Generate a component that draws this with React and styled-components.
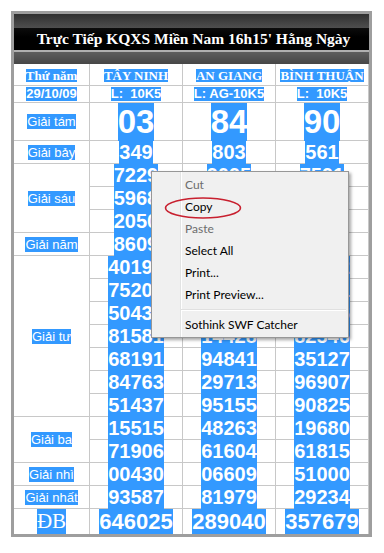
import React from 'react';
import styled, { createGlobalStyle } from 'styled-components';

const Global = createGlobalStyle`
  html, body { margin: 0; padding: 0; background: #fff; }
  body { font-family: "Liberation Sans", Arial, sans-serif; }
`;

const Page = styled.div`
  position: relative;
  width: 384px;
  height: 553px;
  overflow: hidden;
  padding: 11px 0 0 11px;
  box-sizing: border-box;
`;

const Frame = styled.div`
  width: 361px;
  border: 3px solid #9e9e9e;
  box-sizing: border-box;
  background: #fff;
`;

const TopBand = styled.div`
  height: 14px;
  background: linear-gradient(#303030, #4e4e4e);
`;

const TitleBand = styled.div`
  height: 22px;
  background: linear-gradient(#0c0c0c, #000 40%);
  color: #fff;
  font: bold 15.5px "Liberation Serif", "Times New Roman", serif;
  line-height: 22px;
  text-align: center;
  white-space: nowrap;
  padding-left: 4px;
`;

const Rule = styled.div`
  height: 2px;
  background: #b0b0b0;
`;

const SubBand = styled.div`
  height: 12px;
  background: linear-gradient(#5e5e5e, #464646);
`;

const Grid = styled.div`
  display: grid;
  grid-template-columns: 76px 93px 93px 93px;
  grid-template-rows: 22px 17px 38px repeat(16, 23px) 25px;
`;

const Cell = styled.div`
  box-sizing: border-box;
  border-right: 1px solid #c8c8c8;
  border-bottom: ${(p) => (p.$last ? 0 : 1)}px solid #c8c8c8;
  display: flex;
  justify-content: center;
  align-items: ${(p) => (p.$top ? 'flex-start' : 'center')};
  grid-row: ${(p) => (p.$span ? `span ${p.$span}` : 'auto')};
  min-width: 0;
  min-height: 0;
`;

const Num = styled.span`
  display: inline-block;
  background: #3399ff;
  color: #fff;
  font-family: "Liberation Sans", Arial, sans-serif;
  font-weight: bold;
  font-size: ${(p) => p.$size}px;
  height: ${(p) => p.$h}px;
  line-height: ${(p) => p.$h}px;
  white-space: nowrap;
`;

const HeadText = styled.span`
  display: inline-block;
  background: #3399ff;
  color: #fff;
  font: bold 13px "Liberation Serif", "Times New Roman", serif;
  height: 13px;
  line-height: 13px;
  white-space: nowrap;
  margin-top: 2px;
`;

const DateText = styled.span`
  display: inline-block;
  background: #3399ff;
  color: #fff;
  font: bold 13px "Liberation Sans", Arial, sans-serif;
  height: 14px;
  line-height: 14px;
  white-space: pre;
`;

const Label = styled.span`
  background: #3399ff;
  color: #fff;
  font-family: ${(p) => (p.$serif ? '"Liberation Serif", "Times New Roman", serif' : '"Liberation Sans", Arial, sans-serif')};
  font-size: ${(p) => (p.$serif ? 21 : 13)}px;
  white-space: nowrap;
`;

const Menu = styled.div`
  position: absolute;
  left: 151px;
  top: 171px;
  width: 198px;
  height: 167px;
  box-sizing: border-box;
  border: 1px solid #979797;
  background: linear-gradient(
    to right,
    #f0f0f0 28px,
    #e2e3e3 28px,
    #e2e3e3 29px,
    #ffffff 29px,
    #ffffff 30px,
    #f0f0f0 30px
  );
  box-shadow: 2px 2px 3px rgba(0, 0, 0, 0.35);
  padding: 2px 2px 1px 2px;
  font-family: Lato, "Noto Sans", sans-serif;
  font-size: 12px;
`;

const Item = styled.div`
  height: 22px;
  line-height: 22px;
  padding-left: 31px;
  color: ${(p) => (p.$disabled ? '#6d6d6d' : '#000')};
  white-space: nowrap;
`;

const Separator = styled.div`
  margin: 3px 0 3px 27px;
  height: 1px;
  background: #e0e0e0;
  border-bottom: 1px solid #fff;
`;

const Circle = styled.svg`
  position: absolute;
  left: 11px;
  top: 24px;
  pointer-events: none;
`;

const groups = [
  { label: 'Giải tám', pitch: 38, size: 33, rows: [['03', '84', '90']] },
  { label: 'Giải bảy', pitch: 23, size: 20, rows: [['349', '803', '561']] },
  {
    label: 'Giải sáu',
    pitch: 23,
    size: 20,
    rows: [
      ['7229', '9095', '7591'],
      ['5968', '3412', '6027'],
      ['2050', '1876', '4433'],
    ],
  },
  { label: 'Giải năm', pitch: 23, size: 20, rows: [['8609', '5120', '7318']] },
  {
    label: 'Giải tư',
    pitch: 23,
    size: 20,
    rows: [
      ['40193', '27518', '60342'],
      ['75204', '13967', '48851'],
      ['50432', '86205', '71936'],
      ['81581', '14428', '82546'],
      ['68191', '94841', '35127'],
      ['84763', '29713', '96907'],
      ['51437', '95155', '90825'],
    ],
  },
  {
    label: 'Giải ba',
    pitch: 23,
    size: 20,
    rows: [
      ['15515', '48263', '19680'],
      ['71906', '61604', '61815'],
    ],
  },
  { label: 'Giải nhì', pitch: 23, size: 20, rows: [['00430', '06609', '51000']] },
  { label: 'Giải nhất', pitch: 23, size: 20, rows: [['93587', '81979', '29234']] },
  { label: 'ĐB', serif: true, last: true, pitch: 25, size: 22, rows: [['646025', '289040', '357679']] },
];

const provinces = ['TÂY NINH', 'AN GIANG', 'BÌNH THUẬN'];
const tickets = ['L:\u00a0 10K5', 'L: AG-10K5', 'L:\u00a0 10K5'];

const menuItems = [
  { text: 'Cut', disabled: true },
  { text: 'Copy' },
  { text: 'Paste', disabled: true },
  { text: 'Select All' },
  { text: 'Print...' },
  { text: 'Print Preview...' },
  { sep: true },
  { text: 'Sothink SWF Catcher' },
];

export default function App() {
  return (
    <>
      <Global />
      <Page>
        <Frame>
          <TopBand />
          <TitleBand>Trực Tiếp KQXS Miền Nam 16h15' Hằng Ngày</TitleBand>
          <Rule />
          <SubBand />
          <Grid>
            <Cell>
              <HeadText>Thứ năm</HeadText>
            </Cell>
            {provinces.map((p) => (
              <Cell key={p}>
                <HeadText>{p}</HeadText>
              </Cell>
            ))}
            <Cell>
              <DateText>29/10/09</DateText>
            </Cell>
            {tickets.map((t, i) => (
              <Cell key={i}>
                <DateText>{t}</DateText>
              </Cell>
            ))}
            {groups.map((g) => (
              <React.Fragment key={g.label}>
                <Cell $span={g.rows.length} $last={g.last}>
                  <Label $serif={g.serif}>{g.label}</Label>
                </Cell>
                {g.rows.map((r, ri) =>
                  r.map((n, ci) => (
                    <Cell key={`${ri}-${ci}`} $top $last={g.last}>
                      <Num $size={g.size} $h={g.pitch}>
                        {n}
                      </Num>
                    </Cell>
                  ))
                )}
              </React.Fragment>
            ))}
          </Grid>
        </Frame>
        <Menu>
          {menuItems.map((m, i) =>
            m.sep ? (
              <Separator key={i} />
            ) : (
              <Item key={i} $disabled={m.disabled}>
                {m.text}
              </Item>
            )
          )}
          <Circle width="80" height="24" viewBox="0 0 80 24">
            <ellipse cx="40" cy="12" rx="37.5" ry="10" fill="none" stroke="#c8202f" strokeWidth="1.6" />
          </Circle>
        </Menu>
      </Page>
    </>
  );
}
